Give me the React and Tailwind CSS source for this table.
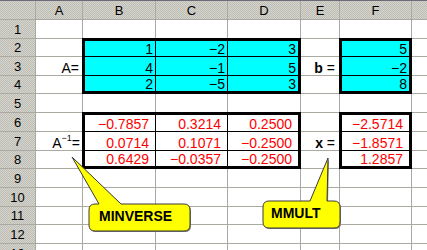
import React from "react"

const colHeads = ["A", "B", "C", "D", "E", "F", "G"]
const rowNums = [1, 2, 3, 4, 5, 6, 7, 8, 9, 10, 11, 12, 13]

const headBg =
  "bg-[image:repeating-conic-gradient(#bebeb6_0%_25%,#d4d4cc_0%_50%)] bg-[length:2px_2px]"

const coeffs = [
  ["1", "−2", "3"],
  ["4", "−1", "5"],
  ["2", "−5", "3"],
]
const rhs = ["5", "−2", "8"]
const inverse = [
  ["−0.7857", "0.3214", "0.2500"],
  ["0.0714", "0.1071", "−0.2500"],
  ["0.6429", "−0.0357", "−0.2500"],
]
const solution = ["−2.5714", "−1.8571", "1.2857"]

// plain sheet cells, listed row by row; cells under a bordered range are left out
const bodyCells = {
  1: ["", "", "", "", "", "", ""],
  2: ["", "", ""],
  3: ["A=", "b =", ""],
  4: ["", "", ""],
  5: ["", "", "", "", "", "", ""],
  6: ["", "", ""],
  7: ["Ainv", "x =", ""],
  8: ["", "", ""],
}

function Label({ value }) {
  if (value === "A=") return <span className="pr-[3px]">A=</span>
  if (value === "Ainv")
    return (
      <span className="pr-[2px]">
        A<sup className="-top-[7px] text-[9px]">−1</sup>=
      </span>
    )
  if (value === "b =" || value === "x =")
    return (
      <span className="pr-[4px]">
        <b>{value[0]}</b> =
      </span>
    )
  return null
}

function Cell({ value }) {
  return (
    <div className="flex items-end justify-end bg-white leading-[14px]">
      <Label value={value} />
    </div>
  )
}

function Range({ pos, rows, cols, values, cyan, red }) {
  return (
    <div className={`-m-px border-[3px] border-black ${pos}`}>
      <div className={`grid h-full gap-px bg-black ${rows} ${cols}`}>
        {values.flat().map((v, i) => (
          <div
            key={i}
            className={`flex items-end justify-end leading-[14px] ${
              cyan ? "bg-[#00ffff] pr-[2px]" : "bg-white pr-[6px]"
            } ${red ? "text-[#ff0000]" : "text-black"}`}
          >
            {v}
          </div>
        ))}
      </div>
    </div>
  )
}

function Callout({ d, x, y, label }) {
  return (
    <>
      <path d={d} transform="translate(1 1)" fill="#808080" />
      <path d={d} fill="#ffff00" stroke="#3a3a3a" strokeWidth="1" />
      <text
        x={x}
        y={y}
        fontFamily="'Liberation Sans', Arial, sans-serif"
        fontWeight="bold"
        fontSize="14"
        fill="#000"
      >
        {label}
      </text>
    </>
  )
}

export default function App() {
  return (
    <div className="relative h-[250px] w-[427px] overflow-hidden bg-white font-['Liberation_Sans',Arial,sans-serif] text-[14px] text-black">
      <div className="grid grid-cols-[35px_46px_72px_71px_72px_38px_71px_90px] grid-rows-[18px_18px_17px_18px_17px_18px_18px_18px_17px_18px_18px_17px_18px_18px] gap-px border-t border-[#6c6c78] bg-[#aaaaa2]">
        {/* column headers */}
        <div className={headBg} />
        {colHeads.map((c) => (
          <div
            key={c}
            className={`flex items-end justify-center pb-[1px] text-[13px] leading-[14px] ${headBg}`}
          >
            {c}
          </div>
        ))}

        {/* bordered ranges */}
        <Range
          pos="col-start-3 col-span-3 row-start-3 row-span-3"
          rows="grid-rows-[15px_18px_15px]"
          cols="grid-cols-[70px_71px_1fr]"
          values={coeffs}
          cyan
        />
        <Range
          pos="col-start-7 row-start-3 row-span-3"
          rows="grid-rows-[15px_18px_15px]"
          cols="grid-cols-1"
          values={rhs.map((v) => [v])}
          cyan
        />
        <Range
          pos="col-start-3 col-span-3 row-start-7 row-span-3"
          rows="grid-rows-[16px_18px_15px]"
          cols="grid-cols-[70px_71px_1fr]"
          values={inverse}
          red
        />
        <Range
          pos="col-start-7 row-start-7 row-span-3"
          rows="grid-rows-[16px_18px_15px]"
          cols="grid-cols-1"
          values={solution.map((v) => [v])}
          red
        />

        {/* row headers and plain cells */}
        {rowNums.map((n) => (
          <React.Fragment key={n}>
            <div
              className={`flex items-end justify-center pb-[1px] text-[13px] leading-[14px] ${headBg}`}
            >
              {n}
            </div>
            {(bodyCells[n] || ["", "", "", "", "", "", ""]).map((v, i) => (
              <Cell key={i} value={v} />
            ))}
          </React.Fragment>
        ))}
      </div>

      {/* comment balloons */}
      <svg className="pointer-events-none absolute inset-0" width="427" height="250">
        <Callout
          d="M95 204 L99 204 L72 157 L121 204 L184 204 Q190 204 190 210 L190 225 Q190 231 184 231 L95 231 Q89 231 89 225 L89 210 Q89 204 95 204 Z"
          x={99}
          y={221}
          label="MINVERSE"
        />
        <Callout
          d="M269 201 L310 201 L328 158 L327 201 L334 201 Q340 201 340 207 L340 222 Q340 228 334 228 L269 228 Q263 228 263 222 L263 207 Q263 201 269 201 Z"
          x={271}
          y={218}
          label="MMULT"
        />
      </svg>
    </div>
  )
}
